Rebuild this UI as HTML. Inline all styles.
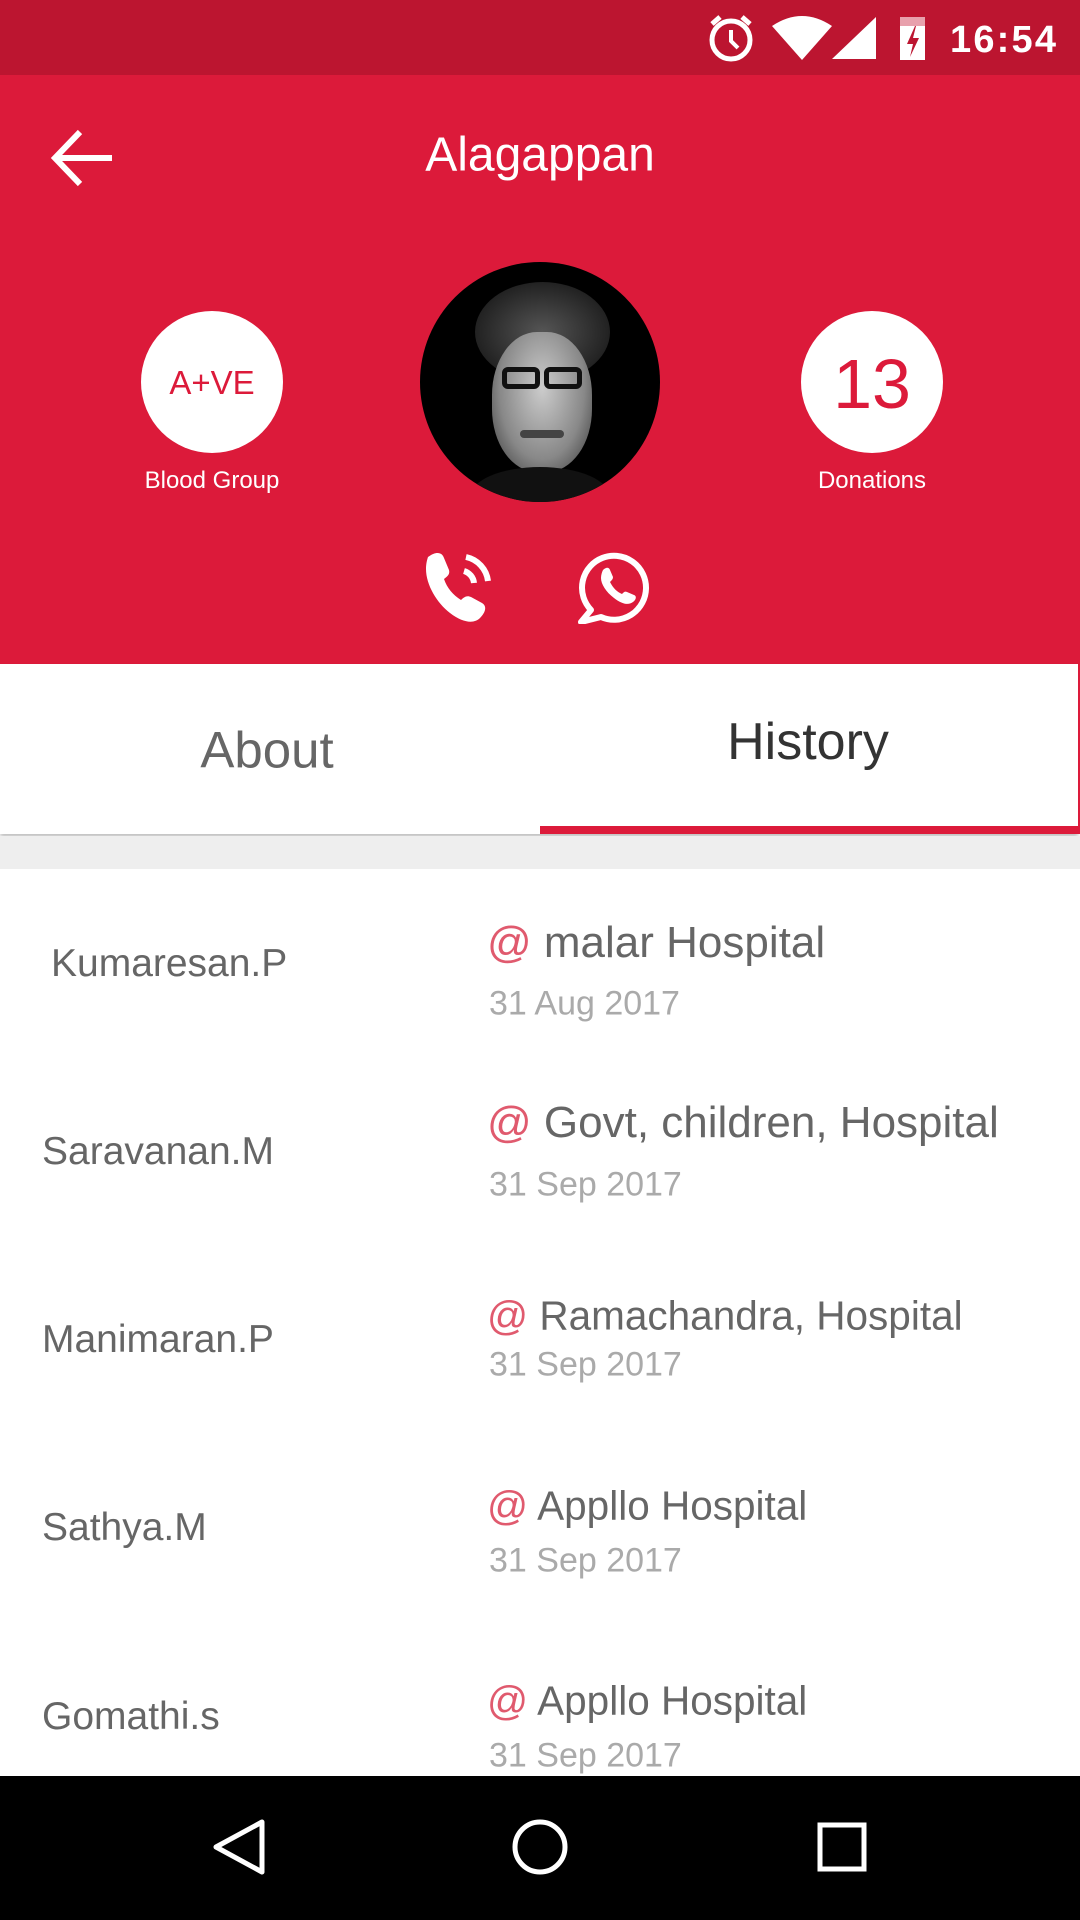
<!DOCTYPE html>
<html><head><meta charset="utf-8"><style>
*{margin:0;padding:0;box-sizing:border-box}
body{width:1080px;height:1920px;position:relative;overflow:hidden;background:#fff;font-family:"Liberation Sans",sans-serif}
.a{position:absolute}
.c{transform:translate(-50%,-50%);white-space:nowrap}
.l{transform:translateY(-50%);white-space:nowrap}
.name{left:42px;font-size:39px;color:#666}
.at{color:#e05a6e}
.h{left:487px;color:#666}
.d{left:489px;font-size:34px;color:#aaa}
</style></head><body>
<div class="a" style="left:0;top:0;width:1080px;height:75px;background:#bc1530"></div>
<div class="a" style="left:0;top:75px;width:1080px;height:589px;background:#dc1a3a"></div>
<svg class="a" style="left:700px;top:12px" width="380" height="52" viewBox="0 0 380 52">
<circle cx="31" cy="28" r="19" fill="none" stroke="#fff" stroke-width="5"/>
<path d="M31 18v11l7 7" stroke="#fff" stroke-width="4" fill="none"/>
<path d="M12 12l8-7M50 12l-8-7" stroke="#fff" stroke-width="5"/>
<path d="M72 14q30-20 60 0l-30 34z" fill="#fff"/>
<path d="M176 5v42h-44z" fill="#fff"/>
<rect x="200" y="12" width="25" height="36" fill="#fff"/>
<rect x="200" y="5" width="25" height="9" fill="#e8a0ac"/>
<path d="M215 14l-8 18h6l-3 13 9-19h-6l3-12z" fill="#bc1530"/>
<text x="250" y="40" font-family="Liberation Sans" font-weight="bold" font-size="38" fill="#fff" textLength="106">16:54</text>
</svg>
<svg class="a" style="left:50px;top:128px" width="66" height="60" viewBox="0 0 66 60"><path d="M6 30H62M30 4L5 30l25 26" stroke="#fff" stroke-width="6" fill="none"/></svg>
<div class="a c" style="left:540px;top:155px;font-size:48px;color:#fff">Alagappan</div>
<div class="a" style="left:141px;top:311px;width:142px;height:142px;border-radius:50%;background:#fff"></div>
<div class="a c" style="left:212px;top:383px;font-size:33px;color:#dc1a3a">A+VE</div>
<div class="a c" style="left:212px;top:481px;font-size:24px;color:#fff">Blood Group</div>
<div class="a" style="left:801px;top:311px;width:142px;height:142px;border-radius:50%;background:#fff"></div>
<div class="a c" style="left:872px;top:384px;font-size:70px;color:#dc1a3a">13</div>
<div class="a c" style="left:872px;top:481px;font-size:24px;color:#fff">Donations</div>
<div class="a" style="left:420px;top:262px;width:240px;height:240px;border-radius:50%;background:#000;overflow:hidden">
<div class="a" style="left:55px;top:20px;width:135px;height:100px;border-radius:50%;background:radial-gradient(#555,#222 70%,#000)"></div>
<div class="a" style="left:72px;top:70px;width:100px;height:140px;border-radius:45%;background:radial-gradient(ellipse at 50% 40%,#ccc,#888 60%,#333)"></div>
<div class="a" style="left:82px;top:105px;width:38px;height:22px;border:5px solid #111;border-radius:6px"></div>
<div class="a" style="left:124px;top:105px;width:38px;height:22px;border:5px solid #111;border-radius:6px"></div>
<div class="a" style="left:100px;top:168px;width:44px;height:8px;background:#444;border-radius:4px"></div>
<div class="a" style="left:50px;top:205px;width:140px;height:60px;background:#111;border-radius:50%"></div>
</div>
<svg class="a" style="left:420px;top:545px" width="80" height="80" viewBox="0 0 80 80">
<path d="M8 12c8-6 14-5 16 1l5 12c1 4-1 6-5 9 3 9 9 16 17 21 3-3 6-5 10-3l11 6c5 3 4 9-2 15-6 6-17 5-30-5C17 58 6 40 6 24c0-5 1-9 2-12z" fill="#fff"/>
<path d="M44 26a14 14 0 0 1 10 12M46 12a28 28 0 0 1 22 24" stroke="#fff" stroke-width="6" fill="none"/>
</svg>
<svg class="a" style="left:577px;top:546px" width="78" height="78" viewBox="0 0 78 78">
<path d="M14 64a32 32 0 1 1 10 7L4 76z" fill="none" stroke="#fff" stroke-width="6" stroke-linejoin="round"/>
<path d="M26 24c3-3 6-3 7 0l3 7c0 2-1 3-3 5 3 6 7 10 12 12 2-2 3-3 5-2l7 3c3 1 2 5-1 7-4 3-10 3-19-4-8-6-13-14-13-20 0-3 1-6 2-8z" fill="#fff"/>
</svg>
<div class="a" style="left:0;top:664px;width:1078px;height:170px;background:#fff;box-shadow:0 3px 4px rgba(0,0,0,.25)"></div>
<div class="a" style="left:1078px;top:664px;width:2px;height:170px;background:#dc1a3a"></div>
<div class="a c" style="left:267px;top:750px;font-size:51px;color:#666">About</div>
<div class="a c" style="left:808px;top:742px;font-size:52px;color:#333">History</div>
<div class="a" style="left:540px;top:826px;width:540px;height:8px;background:#dc1a3a"></div>
<div class="a" style="left:0;top:836px;width:1080px;height:33px;background:#eeeeee"></div>
<div class="a l name" style="left:51px;top:964px">Kumaresan.P</div>
<div class="a l h" style="top:943px;font-size:44px"><span class="at">@</span> malar Hospital</div>
<div class="a l d" style="top:1004px">31 Aug 2017</div>
<div class="a l name" style="top:1152px">Saravanan.M</div>
<div class="a l h" style="top:1123px;font-size:44px"><span class="at">@</span> Govt, children, Hospital</div>
<div class="a l d" style="top:1185px">31 Sep 2017</div>
<div class="a l name" style="top:1340px">Manimaran.P</div>
<div class="a l h" style="top:1316px;font-size:40.5px"><span class="at">@</span> Ramachandra, Hospital</div>
<div class="a l d" style="top:1365px">31 Sep 2017</div>
<div class="a l name" style="top:1528px">Sathya.M</div>
<div class="a l h" style="top:1506px;font-size:40.5px"><span class="at">@</span> Appllo Hospital</div>
<div class="a l d" style="top:1561px">31 Sep 2017</div>
<div class="a l name" style="top:1717px">Gomathi.s</div>
<div class="a l h" style="top:1701px;font-size:40.5px"><span class="at">@</span> Appllo Hospital</div>
<div class="a l d" style="top:1756px">31 Sep 2017</div>
<div class="a" style="left:0;top:1776px;width:1080px;height:144px;background:#000"></div>
<svg class="a" style="left:0;top:1776px" width="1080" height="144" viewBox="0 0 1080 144">
<path d="M262 46L216 71l46 25z" fill="none" stroke="#fff" stroke-width="5" stroke-linejoin="round"/>
<circle cx="540" cy="71" r="25" fill="none" stroke="#fff" stroke-width="5"/>
<rect x="820" y="49" width="44" height="44" fill="none" stroke="#fff" stroke-width="5"/>
</svg>
</body></html>
